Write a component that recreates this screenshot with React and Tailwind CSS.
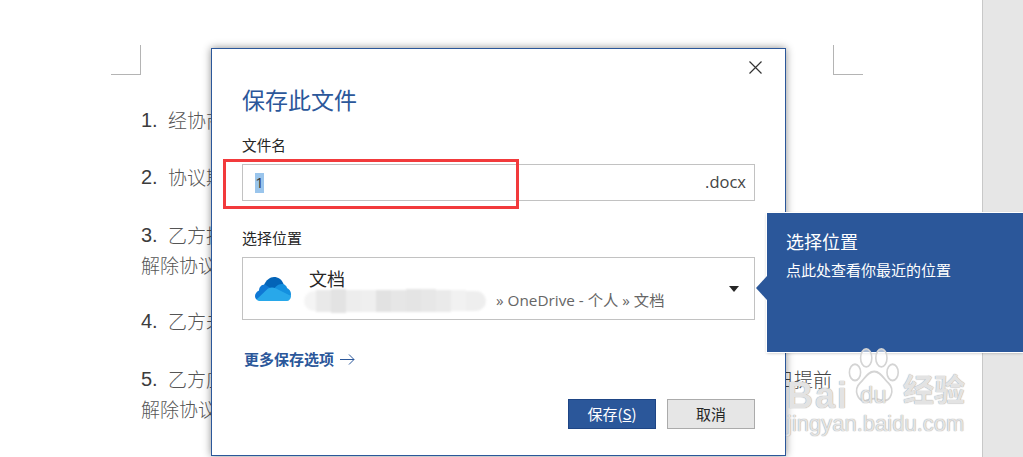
import React from 'react';

const cjk = '"Noto Sans CJK SC", "Liberation Sans", sans-serif';
const latin = '"Open Sans", "Noto Sans CJK SC", sans-serif';

const mosaic = [
  'bg-[#f4f4f4] h-[20px] rounded-l-full w-[12px]',
  'bg-[#e9e9e9] h-[22px] w-[15px]',
  'bg-[#e3e3e3] h-[24px] w-[15px]',
  'bg-[#ededed] h-[22px] w-[15px]',
  'bg-[#efefef] h-[22px] w-[15px]',
  'bg-[#e2e2e2] h-[22px] w-[15px]',
  'bg-[#e6e6e6] h-[22px] w-[15px]',
  'bg-[#e4e4e4] h-[23px] w-[15px]',
  'bg-[#e7e7e7] h-[23px] w-[15px]',
  'bg-[#eaeaea] h-[22px] w-[15px]',
  'bg-[#f1f1f1] h-[21px] w-[15px]',
  'bg-[#eeeeee] h-[20px] rounded-r-full w-[20px]',
];

const CropMark = ({ flip }) => (
  <div className={`h-[30px] w-[30px] border-b border-[#b4b4b4] ${flip ? 'border-l' : 'border-r'}`} />
);

const DocLine = ({ num, text, right }) => (
  <div className="flex h-[30px] items-center justify-between">
    <div className="flex items-center">
      {num && <span className="w-[27px] font-['Liberation_Sans'] text-[20px] text-[#3c3c3c]">{num}</span>}
      <span className="text-[19px] font-light text-[#555]">{text}</span>
    </div>
    {right && <span className="mr-[31px] text-[19px] font-light text-[#444]">{right}</span>}
  </div>
);

const OneDriveIcon = () => (
  <svg width="36" height="24" viewBox="0 0 36 24">
    <path d="M9 8C11 3 15 0 19 0c4 0 8 2.500 9.500 7L20 15z" fill="#0364b8" />
    <path d="M10 7.500C6 7.500 4 10.500 4 13.500 1.500 14.500 0 17 0 19c0 1.500.5 2.500 1.500 3.500L20 14z" fill="#0f78d4" />
    <path d="M28.500 7c-3-.5-6 .5-8 3L17 14l-4 8h20c2 0 3-2 3-5 0-3-2-5-4-6 0-1.500-2-3.500-3.500-4z" fill="#1490df" />
    <path d="M13 11.500 1.500 22.500C2.500 23.500 4 24 5 24h27c2 0 3.500-1.500 4-5L21 11.500c-3-1.500-5-1.500-8 0z" fill="#28a8ea" />
  </svg>
);

const BaiduWatermark = () => (
  <div className="absolute left-[787px] top-[348px] h-[92px] w-[182px] text-white/70 [text-shadow:0_0_1px_#a8a8a8,0_0_1px_#a8a8a8]">
    <svg className="absolute left-[60px] top-0" width="56" height="56" viewBox="0 0 70 62" preserveAspectRatio="none">
      <g fill="#ffffff" fillOpacity="0.6" stroke="#d4d4d4" strokeWidth="2">
        <ellipse cx="10" cy="27" rx="7" ry="9" />
        <ellipse cx="24" cy="11" rx="7" ry="10" />
        <ellipse cx="43" cy="11" rx="7" ry="10" />
        <ellipse cx="57" cy="27" rx="7" ry="9" />
        <path d="M34 26c8 0 12 8 18 13 8 7 3 21-8 19-4-1-7-2-10-2s-6 1-10 2C13 60 8 46 16 39c6-5 10-13 18-13z" />
      </g>
    </svg>
    <span className="absolute left-0 top-[30px] font-['Liberation_Sans'] text-[36px] font-bold leading-none tracking-[2px]">Bai</span>
    <span className="absolute left-[73px] top-[35px] font-['Liberation_Sans'] text-[24px] leading-none">du</span>
    <span className="absolute left-[116px] top-[24px] whitespace-nowrap text-[31px] font-bold leading-none">经验</span>
    <span className="absolute left-0 top-[65px] whitespace-nowrap font-['Liberation_Sans'] text-[22px] leading-none">jingyan.baidu.com</span>
  </div>
);

export default function App() {
  return (
    <div className="relative flex h-[457px] w-[1023px] overflow-hidden bg-white" style={{ fontFamily: cjk }}>
      {/* document page */}
      <div className="flex-1 border-r border-[#c8c8c8] pl-[111px] pr-[119px] pt-[45px]">
        <div className="flex justify-between">
          <CropMark />
          <CropMark flip />
        </div>
        <div className="ml-[30px] mt-[30px] flex flex-col">
          <DocLine num="1." text="经协商一致" />
          <div className="h-[27px]" />
          <DocLine num="2." text="协议期满" />
          <div className="h-[28px]" />
          <DocLine num="3." text="乙方提前" />
          <DocLine text="解除协议" />
          <div className="h-[26px]" />
          <DocLine num="4." text="乙方未能" />
          <div className="h-[28px]" />
          <DocLine num="5." text="乙方应当" right="日提前" />
          <DocLine text="解除协议" />
        </div>
      </div>
      <div className="w-[40px] bg-[#e6e6e6]" />

      {/* save dialog */}
      <div className="absolute left-[211px] top-[48px] flex h-[408px] w-[575px] flex-col border border-[#2b579a] bg-white pl-[30px] pr-[30px] shadow-[0_0_8px_rgba(0,0,0,0.45)]">
        <button className="absolute right-[22px] top-[11px] text-[#333]">
          <svg width="15" height="15" viewBox="0 0 15 15" fill="none" stroke="currentColor" strokeWidth="1.200">
            <path d="M1.500 1.500l12 12M13.500 1.500l-12 12" />
          </svg>
        </button>
        <h1 className="mt-[33px] text-[23px] font-normal leading-[34px] text-[#2b579a]">保存此文件</h1>
        <label className="mt-[18px] text-[14.67px] leading-[22px] text-[#262626]">文件名</label>
        <div className="mt-[8px] flex h-[37px] items-center justify-between border border-[#c2c2c2] pl-[12px] pr-[8px]">
          <span className="flex h-[20px] w-[9px] items-center justify-center bg-[#9ac5ec] text-[15px] text-[#333]" style={{ fontFamily: latin }}>1</span>
          <span className="text-[16.5px] text-[#444]" style={{ fontFamily: latin }}>.docx</span>
        </div>
        <label className="mt-[26px] text-[15px] leading-[22px] text-[#262626]">选择位置</label>
        <div className="mt-[8px] flex h-[63px] items-center border border-[#c2c2c2] pl-[12px] pr-[15px]">
          <OneDriveIcon />
          <div className="ml-[13px] flex min-w-0 flex-1 flex-col">
            <span className="ml-[5px] text-[18px] leading-[24px] text-[#262626]">文档</span>
            <div className="flex h-[22px] items-center text-[#666]">
              <div className="flex items-center blur-[1px]">
                {mosaic.map((cls, i) => <div key={i} className={cls} />)}
              </div>
              <span className="ml-[10px] whitespace-nowrap text-[15.3px]" style={{ fontFamily: latin }}>» OneDrive - 个人 » 文档</span>
            </div>
          </div>
          <div className="h-0 w-0 border-x-[5px] border-t-[6px] border-x-transparent border-t-[#262626]" />
        </div>
        <a className="ml-[2px] mt-[28px] flex items-center text-[15px] font-bold leading-[22px] text-[#2b579a]">
          更多保存选项
          <svg className="ml-[6px]" width="15" height="11" viewBox="0 0 15 11" fill="none" stroke="currentColor" strokeWidth="1">
            <path d="M0 5.500h14M9 .5l5 5-5 5" />
          </svg>
        </a>
        <div className="mt-[29px] flex justify-end gap-[11px]">
          <button className="h-[30px] w-[88px] border border-[#1e4585] bg-[#2b579a] text-[15px] text-white">
            保存(<span className="underline">S</span>)
          </button>
          <button className="h-[30px] w-[88px] border border-[#ababab] bg-[#e6e6e6] text-[15px] text-[#262626]">取消</button>
        </div>
      </div>

      {/* red annotation */}
      <div className="absolute left-[223px] top-[159px] h-[50px] w-[296px] border-[3px] border-[#f23a3c]" />

      {/* callout */}
      <div className="absolute left-[767px] top-[213px] h-[139px] w-[256px] bg-[#2b579a] pl-[19px] pt-[15px] text-white shadow-[0_0_0_1px_#fff,0_1px_3px_rgba(0,0,0,0.3)]">
        <div className="absolute left-[-11px] top-[63px] h-0 w-0 border-y-[12px] border-r-[11px] border-y-transparent border-r-[#2b579a]" />
        <h2 className="text-[18px] font-normal leading-[26px]">选择位置</h2>
        <p className="mt-[5px] text-[15px] leading-[22px]">点此处查看你最近的位置</p>
      </div>

      <BaiduWatermark />
    </div>
  );
}
